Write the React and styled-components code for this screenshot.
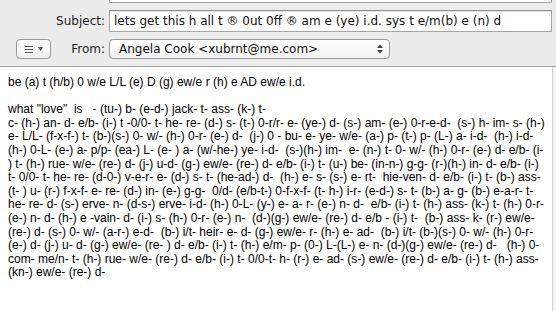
import React from 'react';
import styled, { createGlobalStyle } from 'styled-components';

const GlobalStyle = createGlobalStyle`
  html, body {
    margin: 0;
    padding: 0;
    background: #ffffff;
  }
`;

const Window = styled.div`
  width: 556px;
  height: 311px;
  display: flex;
  flex-direction: column;
  overflow: hidden;
`;

const Header = styled.header`
  background: #ececec;
  border-bottom: 1px solid #a2a2a2;
  height: 66px;
  display: flex;
  flex-direction: column;
  gap: 7px;
`;

const Row = styled.div`
  display: grid;
  grid-template-columns: 105px 443px;
  column-gap: 4px;
  align-items: center;
  height: ${(p) => p.h}px;
`;

const LabelCell = styled.div`
  display: flex;
  align-items: center;
  justify-content: ${(p) => (p.spread ? 'space-between' : 'flex-end')};
  padding-left: ${(p) => (p.spread ? '16px' : '0')};
`;

const Label = styled.span`
  font-family: 'DejaVu Sans', sans-serif;
  font-size: 12px;
  color: #1e1e1e;
`;

const CutField = styled.div`
  grid-column: 2;
  height: 2px;
  align-self: start;
  background: #fff;
  border: 1px solid #a4a4a4;
  border-top: none;
`;

const TextField = styled.div`
  height: 20px;
  background: #fff;
  border: 1px solid #a6a6a6;
  border-top-color: #8e8e8e;
  box-shadow: inset 0 1px 0 #e4e4e4;
  display: flex;
  align-items: center;
  padding-left: 4px;
  font-family: 'DejaVu Sans', sans-serif;
  font-size: 12px;
  color: #111;
  white-space: pre;
  overflow: hidden;
`;

const ActionButton = styled.div`
  width: 33px;
  height: 18px;
  border: 1px solid #9a9a9a;
  border-radius: 4px;
  background: linear-gradient(#ffffff, #f0f0f0);
  display: flex;
  align-items: center;
  justify-content: center;
  gap: 5px;
`;

const Popup = styled.div`
  width: 279px;
  height: 18px;
  border: 1px solid #9a9a9a;
  border-radius: 4px;
  background: linear-gradient(#ffffff, #f1f1f1);
  display: flex;
  align-items: center;
  justify-content: space-between;
  padding: 0 6px 0 9px;
  box-sizing: content-box;
  width: 264px;
  font-family: 'DejaVu Sans', sans-serif;
  font-size: 12px;
  color: #111;
`;

const Body = styled.main`
  flex: 1;
  display: flex;
  background: #fff;
`;

const Message = styled.div`
  flex: 1;
  padding: 9px 0 0 8px;
  font-family: 'Liberation Sans', Arial, sans-serif;
  font-size: 12px;
  line-height: 13.6px;
  color: #000;
`;

const Line = styled.div`
  white-space: pre;
  min-height: 13.6px;
`;

const Gutter = styled.div`
  width: 3px;
  border-left: 1px solid #cfcfcf;
  background: #f7f7f7;
`;

const lines = [
  'be (a) t (h/b) 0 w/e L/L (e) D (g) ew/e r (h) e AD ew/e i.d.',
  '',
  'what "love"  is   - (tu-) b- (e-d-) jack- t- ass- (k-) t-',
  'c- (h-) an- d- e/b- (i-) t -0/0- t- he- re- (d-) s- (t-) 0-r/r- e- (ye-) d- (s-) am- (e-) 0-r-e-d-  (s-) h- im- s- (h-)',
  'e- L/L- (f-x-f-) t- (b-)(s-) 0- w/- (h-) 0-r- (e-) d-  (j-) 0 - bu- e- ye- w/e- (a-) p- (t-) p- (L-) a- i-d-  (h-) i-d-',
  '(h-) 0-L- (e-) a- p/p- (ea-) L- (e- ) a- (w/-he-) ye- i-d-  (s-)(h-) im-  e- (n-) t- 0- w/- (h-) 0-r- (e-) d- e/b- (i-',
  ') t- (h-) rue- w/e- (re-) d- (j-) u-d- (g-) ew/e- (re-) d- e/b- (i-) t- (u-) be- (in-n-) g-g- (r-)(h-) in- d- e/b- (i-)',
  't- 0/0- t- he- re- (d-0-) v-e-r- e- (d-) s- t- (he-ad-) d-  (h-) e- s- (s-) e- rt-  hie-ven- d- e/b- (i-) t- (b-) ass-',
  '(t- ) u- (r-) f-x-f- e- re- (d-) in- (e-) g-g-  0/d- (e/b-t-) 0-f-x-f- (t- h-) i-r- (e-d-) s- t- (b-) a- g- (b-) e-a-r- t-',
  'he- re- d- (s-) erve- n- (d-s-) erve- i-d- (h-) 0-L- (y-) e- a- r- (e-) n- d-  e/b- (i-) t- (h-) ass- (k-) t- (h-) 0-r-',
  '(e-) n- d- (h-) e -vain- d- (i-) s- (h-) 0-r- (e-) n-  (d-)(g-) ew/e- (re-) d- e/b - (i-) t-  (b-) ass- k- (r-) ew/e-',
  '(re-) d- (s-) 0- w/- (a-r-) e-d-  (b-) i/t- heir- e- d- (g-) ew/e- r- (h-) e- ad-  (b-) i/t- (b-)(s-) 0- w/- (h-) 0-r-',
  '(e-) d- (j-) u- d- (g-) ew/e- (re- ) d- e/b- (i-) t- (h-) e/m- p- (0-) L-(L-) e- n- (d-)(g-) ew/e- (re-) d-   (h-) 0-',
  'com- me/n- t- (h-) rue- w/e- (re-) d- e/b- (i-) t- 0/0-t- h- (r-) e- ad- (s-) ew/e- (re-) d- e/b- (i-) t- (h-) ass-',
  '(kn-) ew/e- (re-) d-',
];

const ActionIcon = () => (
  <>
    <svg width="8" height="7" viewBox="0 0 8 7">
      <path d="M0 0.5h8M0 3.5h8M0 6.5h8" stroke="#555" strokeWidth="1" />
    </svg>
    <svg width="5" height="4" viewBox="0 0 5 4">
      <path d="M0 0h5L2.5 4z" fill="#555" />
    </svg>
  </>
);

const Stepper = () => (
  <svg width="6" height="10" viewBox="0 0 6 10">
    <path d="M0 4L3 0.5 6 4z" fill="#444" />
    <path d="M0 6L3 9.5 6 6z" fill="#444" />
  </svg>
);

export default function App() {
  return (
    <>
      <GlobalStyle />
      <Window>
        <Header>
          <Row h={3}>
            <CutField />
          </Row>
          <Row h={22}>
            <LabelCell>
              <Label>Subject:</Label>
            </LabelCell>
            <TextField>lets get this h all t ® 0ut 0ff ® am e (ye) i.d. sys t e/m(b) e (n) d</TextField>
          </Row>
          <Row h={20}>
            <LabelCell spread>
              <ActionButton>
                <ActionIcon />
              </ActionButton>
              <Label>From:</Label>
            </LabelCell>
            <Popup>
              <span>Angela Cook &lt;xubrnt@me.com&gt;</span>
              <Stepper />
            </Popup>
          </Row>
        </Header>
        <Body>
          <Message>
            {lines.map((l, i) => (
              <Line key={i}>{l}</Line>
            ))}
          </Message>
          <Gutter />
        </Body>
      </Window>
    </>
  );
}
